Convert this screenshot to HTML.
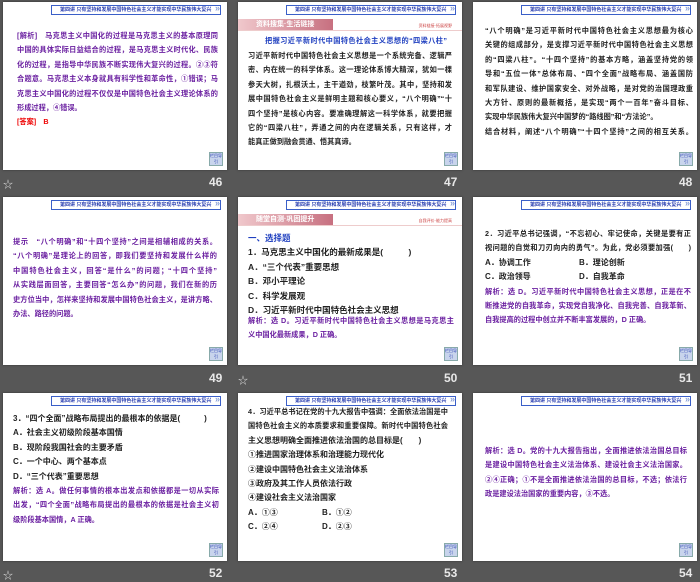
<!DOCTYPE html>
<html><head><meta charset="utf-8"><style>
body{margin:0;width:700px;height:577px;background:#575757;position:relative;overflow:hidden;font-family:"Liberation Sans","Noto Sans CJK SC",sans-serif;}
.s{position:absolute;width:224px;height:168px;background:#fff;box-shadow:0 0 2px #333;overflow:hidden}
.hd{position:absolute;right:6px;top:3px;width:160px;height:8px;border:1px solid #3a5fc8;font-size:5px;line-height:8px;color:#2a3fb0;white-space:nowrap;overflow:hidden;padding-left:8px;font-weight:bold}
.hd:after{content:"»";position:absolute;right:0;top:-2px;font-size:9px;color:#8aa0d8}
.nb{position:absolute;right:4px;bottom:4px;width:12px;height:12px;background:#c8d4ec;border:1px solid #8aa;font-size:4px;line-height:6px;color:#2a3fb0;text-align:center}
.t{position:absolute;left:12px;width:204px;font-size:7.2px;line-height:14.4px;font-weight:bold;white-space:nowrap}
.t div{text-align:justify;text-align-last:justify;white-space:normal;height:14.4px;overflow:hidden}
.t div.e{text-align-last:left;white-space:nowrap}
.o{display:inline-block;width:94px}
.cap{position:absolute;color:#e8e8e8;font-size:12px;font-weight:bold}
.st{position:absolute;color:#ddd;font-size:10px}
.tag{position:absolute;left:0;top:17px;width:77px;height:11px;background:linear-gradient(90deg,#f0c8cc,#c77080);color:#fff;font-size:7px;line-height:11px;padding-left:18px;font-weight:bold}
.tr{position:absolute;right:10px;top:21px;font-size:4px;color:#c44}
.line{position:absolute;left:0;right:0;top:28px;border-top:1px solid #ecc}
.p{color:#6a1fa0}.b{color:#222}.bl{color:#2040c0}.r{color:#e00}
</style></head><body>

<div class="s" style="left:3px;top:2px">
<div class="hd">第四讲 只有坚持和发展中国特色社会主义才能实现中华民族伟大复兴</div>
<div class="t p" style="top:27px;left:14px;width:201px">
<div>[解析]　马克思主义中国化的过程是马克思主义的基本原理同</div>
<div>中国的具体实际日益结合的过程，是马克思主义时代化、民族</div>
<div>化的过程，是指导中华民族不断实现伟大复兴的过程。②③符</div>
<div>合题意。马克思主义本身就具有科学性和革命性，①错误；马</div>
<div>克思主义中国化的过程不仅仅是中国特色社会主义理论体系的</div>
<div class="e">形成过程，④错误。</div>
<div class="e r">[答案]　B</div></div>
<div class="nb">栏目导引</div></div>
<div class="st" style="left:3px;top:176px">☆</div><div class="cap" style="left:209px;top:175px">46</div>

<div class="s" style="left:238px;top:2px">
<div class="hd">第四讲 只有坚持和发展中国特色社会主义才能实现中华民族伟大复兴</div>
<div class="tag">资料搜集·生活链接</div><div class="tr">资料链接·拓展视野</div><div class="line"></div>
<div class="t bl" style="top:32px;left:27px;width:182px"><div>把握习近平新时代中国特色社会主义思想的“四梁八柱”</div></div>
<div class="t b" style="top:47px;left:10px;line-height:14.6px;width:204px">
<div>习近平新时代中国特色社会主义思想是一个系统完备、逻辑严</div>
<div>密、内在统一的科学体系。这一理论体系博大精深，犹如一棵</div>
<div>参天大树，扎根沃土，主干遒劲，枝繁叶茂。其中，坚持和发</div>
<div>展中国特色社会主义是鲜明主题和核心要义，“八个明确”“十</div>
<div>四个坚持”是核心内容。要准确理解这一科学体系，就要把握</div>
<div>它的“四梁八柱”，弄通之间的内在逻辑关系，只有这样，才</div>
<div class="e">能真正做到融会贯通、悟其真谛。</div></div>
<div class="nb">栏目导引</div></div>
<div class="cap" style="left:444px;top:175px">47</div>

<div class="s" style="left:473px;top:2px">
<div class="hd">第四讲 只有坚持和发展中国特色社会主义才能实现中华民族伟大复兴</div>
<div class="t b" style="top:21px;left:12px;line-height:15px;width:208px">
<div>“八个明确”是习近平新时代中国特色社会主义思想最为核心</div>
<div>关键的组成部分，是支撑习近平新时代中国特色社会主义思想</div>
<div>的“四梁八柱”。“十四个坚持”的基本方略，涵盖坚持党的领</div>
<div>导和“五位一体”总体布局、“四个全面”战略布局、涵盖国防</div>
<div>和军队建设、维护国家安全、对外战略，是对党的治国理政重</div>
<div>大方针、原则的最新概括，是实现“两个一百年”奋斗目标、</div>
<div class="e">实现中华民族伟大复兴中国梦的“路线图”和“方法论”。</div>
<div>结合材料，阐述“八个明确”“十四个坚持”之间的相互关系。</div></div>
<div class="nb">栏目导引</div></div>
<div class="cap" style="left:679px;top:175px">48</div>

<div class="s" style="left:3px;top:197px">
<div class="hd">第四讲 只有坚持和发展中国特色社会主义才能实现中华民族伟大复兴</div>
<div class="t p" style="top:38px;left:10px;width:204px">
<div>提示　“八个明确”和“十四个坚持”之间是相辅相成的关系。</div>
<div>“八个明确”是理论上的回答，即我们要坚持和发展什么样的</div>
<div>中国特色社会主义，回答“是什么”的问题；“十四个坚持”</div>
<div>从实践层面回答，主要回答“怎么办”的问题，我们在新的历</div>
<div>史方位当中，怎样来坚持和发展中国特色社会主义，是讲方略、</div>
<div class="e">办法、路径的问题。</div></div>
<div class="nb">栏目导引</div></div>
<div class="cap" style="left:209px;top:371px">49</div>

<div class="s" style="left:238px;top:197px">
<div class="hd">第四讲 只有坚持和发展中国特色社会主义才能实现中华民族伟大复兴</div>
<div class="tag">随堂自测·巩固提升</div><div class="tr">自我评价·能力提高</div><div class="line"></div>
<div class="t" style="top:34px;left:10px;line-height:14px;font-size:8.5px">
<div class="e bl">一、选择题</div>
<div class="e b">1．马克思主义中国化的最新成果是(　　　)</div>
<div class="e b">A．“三个代表”重要思想</div>
<div class="e b">B．邓小平理论</div>
<div class="e b">C．科学发展观</div>
<div class="e b">D．习近平新时代中国特色社会主义思想</div></div>
<div class="t p" style="top:116px;left:10px;line-height:15.5px;width:206px">
<div>解析：选 D。习近平新时代中国特色社会主义思想是马克思主</div>
<div class="e">义中国化最新成果，D 正确。</div></div>
<div class="nb">栏目导引</div></div>
<div class="st" style="left:238px;top:372px">☆</div><div class="cap" style="left:444px;top:371px">50</div>

<div class="s" style="left:473px;top:197px">
<div class="hd">第四讲 只有坚持和发展中国特色社会主义才能实现中华民族伟大复兴</div>
<div class="t" style="top:29px;left:12px;line-height:15px;width:206px">
<div class="b">2．习近平总书记强调，“不忘初心、牢记使命，关键是要有正</div>
<div class="b">视问题的自觉和刀刃向内的勇气”。为此，党必须要加强(　　)</div>
<div class="e b" style="font-size:8px"><span class="o">A．协调工作</span>B．理论创新</div>
<div class="e b" style="font-size:8px"><span class="o">C．政治领导</span>D．自我革命</div>
<div class="p">解析：选 D。习近平新时代中国特色社会主义思想，正是在不</div>
<div class="p">断推进党的自我革命，实现党自我净化、自我完善、自我革新、</div>
<div class="e p">自我提高的过程中创立并不断丰富发展的，D 正确。</div></div>
<div class="nb">栏目导引</div></div>
<div class="cap" style="left:679px;top:371px">51</div>

<div class="s" style="left:3px;top:393px">
<div class="hd">第四讲 只有坚持和发展中国特色社会主义才能实现中华民族伟大复兴</div>
<div class="t" style="top:19px;left:10px;line-height:14.5px;width:206px">
<div class="e b" style="font-size:8px">3．“四个全面”战略布局提出的最根本的依据是(　　　)</div>
<div class="e b" style="font-size:8px">A．社会主义初级阶段基本国情</div>
<div class="e b" style="font-size:8px">B．现阶段我国社会的主要矛盾</div>
<div class="e b" style="font-size:8px">C．一个中心、两个基本点</div>
<div class="e b" style="font-size:8px">D．“三个代表”重要思想</div>
<div class="p">解析：选 A。做任何事情的根本出发点和依据都是一切从实际</div>
<div class="p">出发，“四个全面”战略布局提出的最根本的依据是社会主义初</div>
<div class="e p">级阶段基本国情，A 正确。</div></div>
<div class="nb">栏目导引</div></div>
<div class="st" style="left:3px;top:567px">☆</div><div class="cap" style="left:209px;top:566px">52</div>

<div class="s" style="left:238px;top:393px">
<div class="hd">第四讲 只有坚持和发展中国特色社会主义才能实现中华民族伟大复兴</div>
<div class="t b" style="top:12px;left:10px;line-height:14.5px;width:200px">
<div>4．习近平总书记在党的十九大报告中强调：全面依法治国是中</div>
<div>国特色社会主义的本质要求和重要保障。新时代中国特色社会</div>
<div class="e" style="font-size:8px">主义思想明确全面推进依法治国的总目标是(　　)</div>
<div class="e" style="font-size:8px">①推进国家治理体系和治理能力现代化</div>
<div class="e" style="font-size:8px">②建设中国特色社会主义法治体系</div>
<div class="e" style="font-size:8px">③政府及其工作人员依法行政</div>
<div class="e" style="font-size:8px">④建设社会主义法治国家</div>
<div class="e" style="font-size:8px"><span class="o" style="width:74px">A．①③</span>B．①②</div>
<div class="e" style="font-size:8px"><span class="o" style="width:74px">C．②④</span>D．②③</div></div>
<div class="nb">栏目导引</div></div>
<div class="cap" style="left:444px;top:566px">53</div>

<div class="s" style="left:473px;top:393px">
<div class="hd">第四讲 只有坚持和发展中国特色社会主义才能实现中华民族伟大复兴</div>
<div class="t p" style="top:50px;left:12px;line-height:15px;width:202px">
<div>解析：选 D。党的十九大报告指出，全面推进依法治国总目标</div>
<div>是建设中国特色社会主义法治体系、建设社会主义法治国家。</div>
<div>②④正确；①不是全面推进依法治国的总目标，不选；依法行</div>
<div class="e">政是建设法治国家的重要内容，③不选。</div></div>
<div class="nb">栏目导引</div></div>
<div class="cap" style="left:679px;top:566px">54</div>

</body></html>
